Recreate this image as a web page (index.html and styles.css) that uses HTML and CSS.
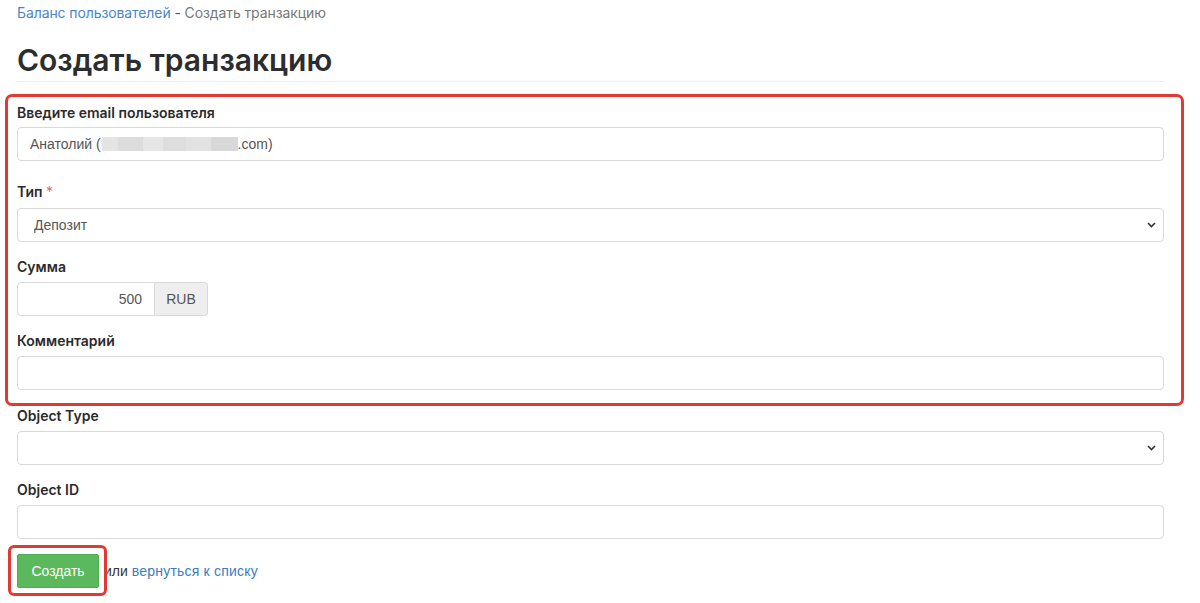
FILE: index.html
```html
<!DOCTYPE html>
<html lang="ru">
<head>
<meta charset="utf-8">
<title>Создать транзакцию</title>
<link rel="stylesheet" href="styles.css">
</head>
<body>
<div class="page">
  <div class="breadcrumb"><a href="#" class="crumb-link">Баланс пользователей</a><span class="crumb-sep"> - </span><span class="crumb-current">Создать транзакцию</span></div>
  <h1 class="page-title">Создать транзакцию</h1>
  <form class="form">
    <div class="highlight">
      <div class="group group-email">
        <label class="label label-email">Введите email пользователя</label>
        <div class="control control-text">Анатолий (<span class="faint">f</span><span class="blur"></span>.com)</div>
      </div>
      <div class="group">
        <label class="label label-type">Тип <span class="req">*</span></label>
        <div class="select-wrap">
          <select class="control control-select"><option>Депозит</option></select>
          <svg class="chevron" width="9" height="6" viewBox="0 0 9 6"><path d="M1 1l3.5 3.5L8 1" fill="none" stroke="#333" stroke-width="1.6"/></svg>
        </div>
      </div>
      <div class="group">
        <label class="label">Сумма</label>
        <div class="input-group">
          <input class="control control-amount" type="text" value="500">
          <span class="addon">RUB</span>
        </div>
      </div>
      <div class="group group-last">
        <label class="label">Комментарий</label>
        <input class="control" type="text">
      </div>
    </div>
    <div class="group">
      <label class="label">Object Type</label>
      <div class="select-wrap">
        <select class="control control-select"><option></option></select>
        <svg class="chevron" width="9" height="6" viewBox="0 0 9 6"><path d="M1 1l3.5 3.5L8 1" fill="none" stroke="#333" stroke-width="1.6"/></svg>
      </div>
    </div>
    <div class="group">
      <label class="label">Object ID</label>
      <input class="control" type="text">
    </div>
    <div class="actions">
      <span class="btn-wrap"><button type="button" class="btn">Создать</button></span>
      <span class="or">или</span> <a href="#" class="back-link">вернуться к списку</a>
    </div>
  </form>
</div>
</body>
</html>
```
FILE: styles.css
```css
html, body {
  margin: 0;
  padding: 0;
  background: #fff;
}
body {
  font-family: Inter, "Noto Sans", sans-serif;
  color: #333;
  font-size: 14px;
  min-height: 100vh;
}
.page {
  padding: 0 36px 20px 17px;
}
.breadcrumb {
  height: 26px;
  line-height: 26px;
  font-size: 14px;
  letter-spacing: -0.1px;
}
.crumb-link {
  color: #4a86c3;
  text-decoration: none;
}
.crumb-sep {
  color: #555;
}
.crumb-current {
  color: #777;
}
.page-title {
  margin: 16px 0 21px;
  font-size: 30px;
  line-height: 36px;
  font-weight: 600;
  color: #2d2d2d;
  padding-bottom: 3px;
  border-bottom: 1px solid #eee;
  letter-spacing: 0;
}
.highlight {
  position: relative;
  display: flow-root;
}
.highlight::after {
  content: "";
  position: absolute;
  top: -9px;
  left: -12px;
  right: -20px;
  bottom: 0;
  border: 3px solid #e23a32;
  border-radius: 7px;
  pointer-events: none;
}
.group {
  margin-bottom: 15px;
}
.group-email {
  margin-bottom: 21px;
}
.group-last {
  margin-bottom: 16px;
}
.label {
  display: block;
  font-weight: 600;
  font-size: 14px;
  line-height: 20px;
  margin-bottom: 5px;
  color: #2b2b2b;
}
.label-email {
  margin-bottom: 4px;
}
.label-type {
  margin-bottom: 6px;
}
.req {
  color: #e06a6a;
  font-weight: 400;
}
.control {
  display: block;
  box-sizing: border-box;
  width: 100%;
  height: 34px;
  padding: 6px 12px;
  margin: 0;
  border: 1px solid #d9d9d9;
  border-radius: 4px;
  background: #fff;
  font-family: "Liberation Sans", Arial, sans-serif;
  font-size: 14px;
  line-height: 20px;
  color: #555;
  outline: none;
}
.control-text {
  white-space: nowrap;
}
.faint {
  color: #c8c8c8;
}
.blur {
  display: inline-block;
  width: 136px;
  height: 14px;
  vertical-align: -2px;
  margin-left: -3px;
  background: linear-gradient(90deg, #e4e4e4 0 12%, #dcdcdc 12% 30%, #e6e6e6 30% 45%, #dedede 45% 62%, #e2e2e2 62% 80%, #d8d8d8 80% 100%);
}
.select-wrap {
  position: relative;
}
.control-select {
  appearance: none;
  -webkit-appearance: none;
  padding-left: 16px;
}
.chevron {
  position: absolute;
  right: 8px;
  top: 14px;
  pointer-events: none;
}
.input-group {
  display: flex;
  width: 191px;
}
.control-amount {
  width: 138px;
  flex: none;
  text-align: right;
  border-radius: 4px 0 0 4px;
}
.addon {
  flex: none;
  box-sizing: border-box;
  width: 53px;
  height: 34px;
  line-height: 32px;
  text-align: center;
  border: 1px solid #d9d9d9;
  border-left: 0;
  border-radius: 0 4px 4px 0;
  background: #eee;
  font-family: "Liberation Sans", Arial, sans-serif;
  font-size: 14px;
  color: #555;
}
.actions {
  display: flex;
  align-items: center;
  font-family: "Liberation Sans", Arial, sans-serif;
  font-size: 14px;
  color: #333;
}
.btn-wrap {
  position: relative;
  display: inline-block;
}
.btn-wrap::after {
  content: "";
  position: absolute;
  top: -9px;
  left: -9px;
  right: -8px;
  bottom: -8px;
  border: 3px solid #e23a32;
  border-radius: 6px;
  pointer-events: none;
}
.btn {
  display: block;
  box-sizing: border-box;
  height: 34px;
  width: 82px;
  padding: 6px 12px;
  border: 1px solid #4cae4c;
  border-radius: 2px;
  background: #5cb85c;
  color: #fff;
  font-family: "Liberation Sans", Arial, sans-serif;
  font-size: 14px;
  line-height: 20px;
}
.or {
  margin-left: 5px;
  margin-right: 4px;
}
.back-link {
  color: #3a7dc0;
  text-decoration: none;
  letter-spacing: 0.2px;
}
```
